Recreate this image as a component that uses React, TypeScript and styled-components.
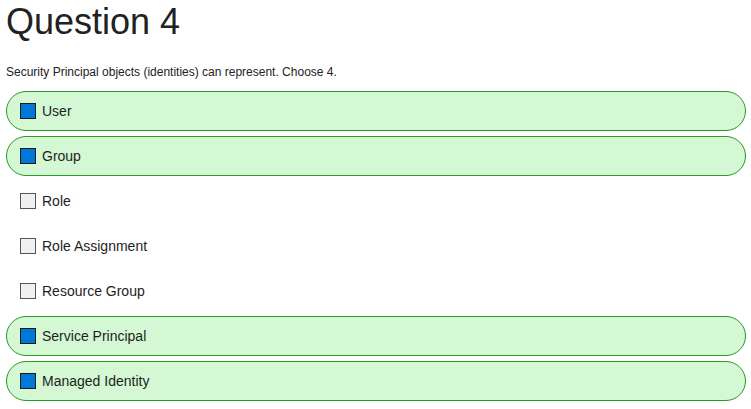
import React from "react";
import styled, { createGlobalStyle } from "styled-components";

const Global = createGlobalStyle`
  html, body { margin: 0; padding: 0; background: #fff; }
  body { font-family: "Liberation Sans", Arial, sans-serif; color: #222; }
`;

const Page = styled.div`
  padding: 0 5px 0 6px;
`;

const Title = styled.h1`
  margin: 0;
  padding-top: 2px;
  font-size: 36px;
  font-weight: 400;
  line-height: 40px;
  color: #222;
`;

const Prompt = styled.p`
  margin: 22px 0 0 0;
  font-size: 12px;
  line-height: 16px;
  color: #222;
`;

const List = styled.div`
  margin-top: 11px;
  display: flex;
  flex-direction: column;
  gap: 5px;
`;

const Option = styled.div<{ $correct: boolean }>`
  height: 40px;
  box-sizing: border-box;
  display: flex;
  align-items: center;
  gap: 6px;
  padding-left: 13px;
  border-radius: 20px;
  border: 1px solid ${(p) => (p.$correct ? "#2a992a" : "transparent")};
  background: ${(p) => (p.$correct ? "#d3f8d3" : "transparent")};
  font-size: 14px;
  color: #1e1e1e;
`;

const Box = styled.span<{ $checked: boolean }>`
  width: 16px;
  height: 16px;
  box-sizing: border-box;
  border: 1px solid ${(p) => (p.$checked ? "#1a1a1a" : "#555")};
  background: ${(p) => (p.$checked ? "#0078d7" : "#f0f0f0")};
  flex: none;
`;

const options = [
  { label: "User", correct: true },
  { label: "Group", correct: true },
  { label: "Role", correct: false },
  { label: "Role Assignment", correct: false },
  { label: "Resource Group", correct: false },
  { label: "Service Principal", correct: true },
  { label: "Managed Identity", correct: true },
];

export default function App() {
  return (
    <Page>
      <Global />
      <Title>Question 4</Title>
      <Prompt>Security Principal objects (identities) can represent. Choose 4.</Prompt>
      <List>
        {options.map((o) => (
          <Option key={o.label} $correct={o.correct}>
            <Box $checked={o.correct} />
            <span>{o.label}</span>
          </Option>
        ))}
      </List>
    </Page>
  );
}
